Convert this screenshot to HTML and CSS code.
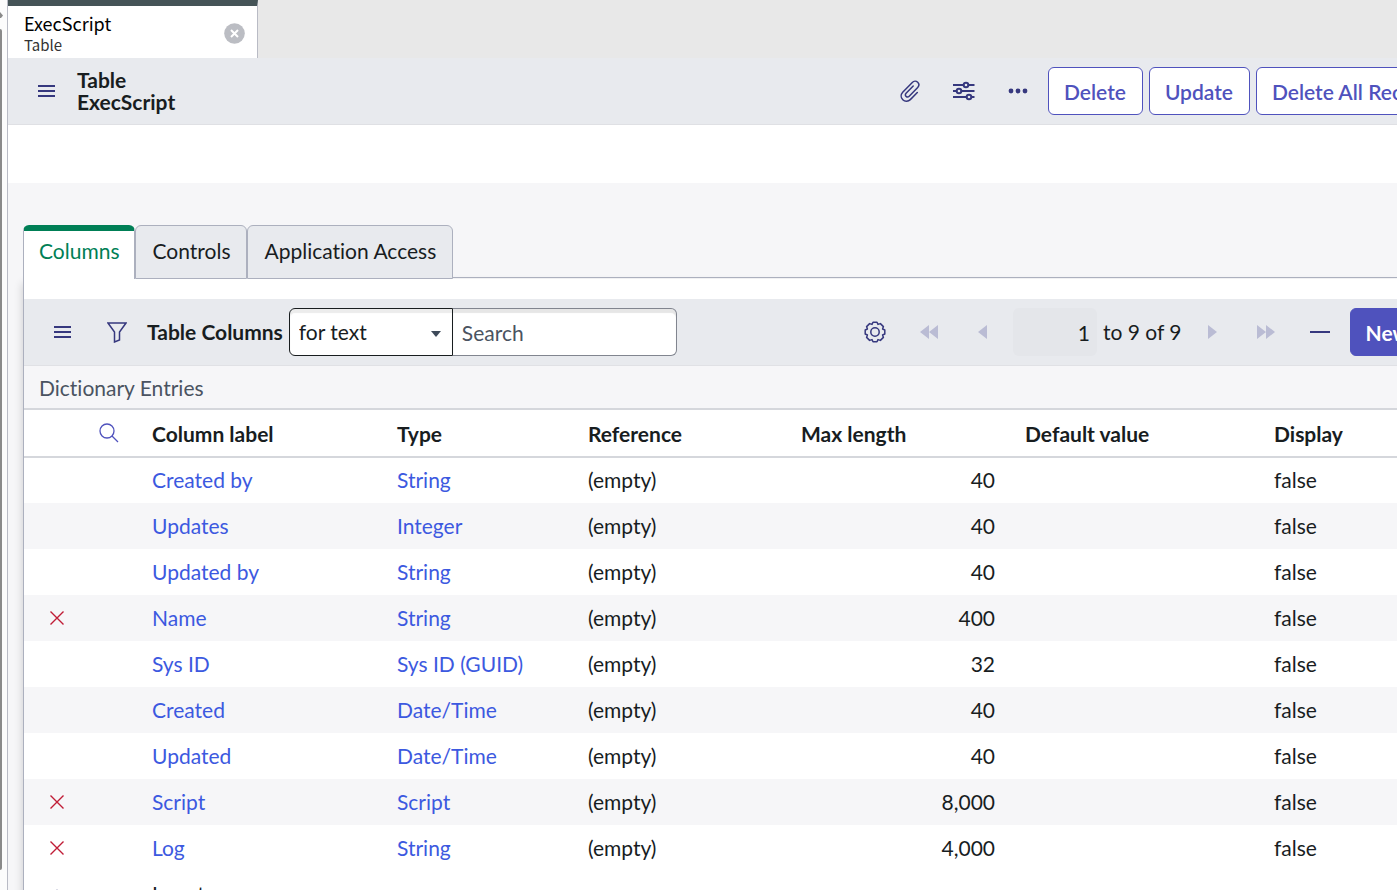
FILE: index.html
```
<!DOCTYPE html>
<html lang="en">
<head>
  <meta charset="UTF-8" />
  <title>ExecScript | Table</title>
  <meta name="viewport" content="width=device-width,initial-scale=1" />
  <link rel="stylesheet" href="styles.css">
</head>
<body>
  <div class="page">
    <!-- edge of the collapsed navigator -->
    <div class="rail">
      <svg class="rail-arrow" width="3" height="8" viewBox="0 0 3 8"><path d="M0 1 L3 4.5 L1 7 H0 Z" fill="#8a8a8a"/></svg>
      <div class="rail-thumb"></div>
    </div>

    <main class="workspace">
      <div class="tab-strip">
        <div class="doc-tab">
          <div>
            <div class="doc-title">ExecScript</div>
            <div class="doc-sub">Table</div>
          </div>
          <button type="button" class="doc-close" aria-label="Close tab">
            <svg width="21" height="21" viewBox="0 0 21 21"><circle cx="10.5" cy="10.5" r="10.3" fill="#bbbdc3"/><path d="M7 7 L14 14 M14 7 L7 14" stroke="#fff" stroke-width="2"/></svg>
          </button>
        </div>
      </div>

      <header class="form-header">
        <button type="button" class="icon-btn form-menu" aria-label="Menu">
          <svg width="18" height="12" viewBox="0 0 18 12"><path d="M0 1 H17 M0 6 H17 M0 11 H17" stroke="#36387e" stroke-width="2"/></svg>
        </button>
        <h1 class="form-title">Table<br>ExecScript</h1>
        <div class="form-actions">
          <button type="button" class="icon-btn" aria-label="Attachments">
            <svg width="22" height="24" viewBox="0 0 22 24" fill="none" stroke="#36387e" stroke-width="1.5" stroke-linecap="round"><path d="M18.3 13.5 L11.3 20.6 C9.3 22.6 6 22.9 3.8 20.8 C1.6 18.7 1.7 15.5 3.7 13.3 L13.3 3.4 C14.8 1.8 17.2 1.8 18.7 3.2 C20.2 4.7 20.1 6.9 18.7 8.4 L10.2 17.2 C9.3 18.1 8 18.2 7.1 17.4 C6.2 16.5 6.3 15.2 7.1 14.3 L14.2 7"/></svg>
          </button>
          <button type="button" class="icon-btn" aria-label="Personalize form">
            <svg width="22" height="20" viewBox="0 0 22 20" fill="none" stroke="#36387e" stroke-width="2"><path d="M0 4 H10.5 M15.5 4 H21.5 M0 10 H3.5 M8.5 10 H21.5 M0 16 H13.5 M18.5 16 H21.5"/><circle cx="13" cy="4" r="2.3"/><circle cx="6" cy="10" r="2.3"/><circle cx="16" cy="16" r="2.3"/></svg>
          </button>
          <button type="button" class="icon-btn more" aria-label="More options">
            <svg width="20" height="6" viewBox="0 0 20 6" fill="#36387e"><circle cx="3" cy="3" r="2.4"/><circle cx="10" cy="3" r="2.4"/><circle cx="17" cy="3" r="2.4"/></svg>
          </button>
          <button type="button" class="btn">Delete</button>
          <button type="button" class="btn">Update</button>
          <button type="button" class="btn">Delete All Records</button>
        </div>
      </header>

      <div class="form-body"></div>

      <section class="related">
        <div class="tabs" role="tablist">
          <button type="button" class="tab active" role="tab" aria-selected="true">Columns</button>
          <button type="button" class="tab" role="tab">Controls</button>
          <button type="button" class="tab" role="tab">Application Access</button>
          <div class="tabs-line"></div>
        </div>

        <div class="panel">
          <div class="list-bar">
            <button type="button" class="icon-btn list-menu" aria-label="List menu">
              <svg width="18" height="12" viewBox="0 0 18 12"><path d="M0 1 H17 M0 6 H17 M0 11 H17" stroke="#36387e" stroke-width="2"/></svg>
            </button>
            <button type="button" class="icon-btn list-filter" aria-label="Filter">
              <svg width="20" height="21" viewBox="0 0 20 21" fill="none" stroke="#36387e" stroke-width="1.5"><path d="M1 1 H19 L12.5 10 V18 L7.5 20 V10 Z"/></svg>
            </button>
            <h2 class="list-title">Table Columns</h2>
            <div class="search-group">
              <div class="select-wrap">
                <select class="search-field" aria-label="Search field">
                  <option>for text</option>
                </select>
                <svg class="caret" width="10" height="6" viewBox="0 0 10 6"><path d="M0 0 H10 L5 6 Z" fill="#3e4a5a"/></svg>
              </div>
              <input type="text" class="search-input" placeholder="Search" aria-label="Search">
            </div>

            <div class="pager">
              <button type="button" class="icon-btn" aria-label="List settings">
                <svg width="22" height="22" viewBox="0 0 22 22" fill="none" stroke="#36387e" stroke-width="1.5"><circle cx="11" cy="11" r="4.2"/><path d="M8 3.4 L9 1.2 H13 L14 3.4 L16.4 2.6 L19.4 5.6 L18.6 8 L20.8 9 V13 L18.6 14 L19.4 16.4 L16.4 19.4 L14 18.6 L13 20.8 H9 L8 18.6 L5.6 19.4 L2.6 16.4 L3.4 14 L1.2 13 V9 L3.4 8 L2.6 5.6 L5.6 2.6 Z" stroke-linejoin="round"/></svg>
              </button>
              <button type="button" class="icon-btn" aria-label="First page">
                <svg width="18" height="14" viewBox="0 0 18 14" fill="#babcd4"><path d="M9 0 V14 L0 7 Z M18 0 V14 L9 7 Z"/></svg>
              </button>
              <button type="button" class="icon-btn" aria-label="Previous page">
                <svg width="18" height="14" viewBox="0 0 18 14" fill="#babcd4"><path d="M13 0 V14 L4 7 Z"/></svg>
              </button>
              <input type="text" class="page-input" value="1" aria-label="Go to row">
              <span class="page-text">to 9 of 9</span>
              <button type="button" class="icon-btn" aria-label="Next page">
                <svg width="18" height="14" viewBox="0 0 18 14" fill="#babcd4"><path d="M5 0 V14 L14 7 Z"/></svg>
              </button>
              <button type="button" class="icon-btn" aria-label="Last page">
                <svg width="18" height="14" viewBox="0 0 18 14" fill="#babcd4"><path d="M0 0 V14 L9 7 Z M9 0 V14 L18 7 Z"/></svg>
              </button>
              <button type="button" class="icon-btn more" aria-label="Collapse list">
                <svg width="20" height="2" viewBox="0 0 20 2"><path d="M0 1 H20" stroke="#36387e" stroke-width="2"/></svg>
              </button>
              <button type="button" class="btn btn-primary">New</button>
            </div>
          </div>

          <div class="crumb">Dictionary Entries</div>

          <table class="list">
            <colgroup>
              <col class="c-del"><col class="c-label"><col class="c-type"><col class="c-ref"><col class="c-max"><col class="c-def"><col>
            </colgroup>
            <thead>
              <tr>
                <th class="search-cell">
                  <button type="button" class="icon-btn" aria-label="Show column search">
                    <svg width="20" height="20" viewBox="0 0 20 20" fill="none" stroke="#4f52bd" stroke-width="1.3"><circle cx="8" cy="8" r="7"/><path d="M13 13 L19 19"/></svg>
                  </button>
                </th>
                <th>Column label</th><th>Type</th><th>Reference</th><th>Max length</th><th>Default value</th><th>Display</th>
              </tr>
            </thead>
            <tbody>
              <tr><td></td><td><a href="#">Created by</a></td><td><a href="#">String</a></td><td>(empty)</td><td class="num">40</td><td></td><td>false</td></tr>
              <tr><td></td><td><a href="#">Updates</a></td><td><a href="#">Integer</a></td><td>(empty)</td><td class="num">40</td><td></td><td>false</td></tr>
              <tr><td></td><td><a href="#">Updated by</a></td><td><a href="#">String</a></td><td>(empty)</td><td class="num">40</td><td></td><td>false</td></tr>
              <tr><td class="del"><button type="button" class="icon-btn" aria-label="Delete row"><svg width="14" height="14" viewBox="0 0 14 14"><path d="M0.5 0.5 L13.5 13.5 M13.5 0.5 L0.5 13.5" stroke="#c01c36" stroke-width="1.4"/></svg></button></td><td><a href="#">Name</a></td><td><a href="#">String</a></td><td>(empty)</td><td class="num">400</td><td></td><td>false</td></tr>
              <tr><td></td><td><a href="#">Sys ID</a></td><td><a href="#">Sys ID (GUID)</a></td><td>(empty)</td><td class="num">32</td><td></td><td>false</td></tr>
              <tr><td></td><td><a href="#">Created</a></td><td><a href="#">Date/Time</a></td><td>(empty)</td><td class="num">40</td><td></td><td>false</td></tr>
              <tr><td></td><td><a href="#">Updated</a></td><td><a href="#">Date/Time</a></td><td>(empty)</td><td class="num">40</td><td></td><td>false</td></tr>
              <tr><td class="del"><button type="button" class="icon-btn" aria-label="Delete row"><svg width="14" height="14" viewBox="0 0 14 14"><path d="M0.5 0.5 L13.5 13.5 M13.5 0.5 L0.5 13.5" stroke="#c01c36" stroke-width="1.4"/></svg></button></td><td><a href="#">Script</a></td><td><a href="#">Script</a></td><td>(empty)</td><td class="num">8,000</td><td></td><td>false</td></tr>
              <tr><td class="del"><button type="button" class="icon-btn" aria-label="Delete row"><svg width="14" height="14" viewBox="0 0 14 14"><path d="M0.5 0.5 L13.5 13.5 M13.5 0.5 L0.5 13.5" stroke="#c01c36" stroke-width="1.4"/></svg></button></td><td><a href="#">Log</a></td><td><a href="#">String</a></td><td>(empty)</td><td class="num">4,000</td><td></td><td>false</td></tr>
            </tbody>
            <tfoot>
              <tr><td class="del"><svg width="14" height="14" viewBox="0 0 14 14"><path d="M7 0 V14 M0 7 H14" stroke="#dcdde8" stroke-width="2"/></svg></td><td colspan="6">Insert a new row...</td></tr>
            </tfoot>
          </table>
        </div>
      </section>
    </main>
  </div>
</body>
</html>
```

FILE: styles.css
```
* {
    box-sizing: border-box;
}

body {
    margin: 0;
    height: 100vh;
    overflow: hidden;
    font-family: Lato, "Liberation Sans", sans-serif;
    font-size: 21px;
    font-variant-ligatures: none;
    color: #181d1f;
    background: #fff;
}

button, input, select {
    font: inherit;
    font-variant-ligatures: none;
    color: inherit;
    margin: 0;
}

.page {
    display: flex;
    height: 100vh;
}

/* left edge */
.rail {
    flex: 0 0 7px;
    display: flex;
    flex-direction: column;
    padding: 11px 0 20px;
    background: #fcfcfc;
}

.rail-thumb {
    flex: 1;
    width: 2px;
    margin-top: 10px;
    background: #8a8a8a;
    border-radius: 0 2px 2px 0;
}

.workspace {
    flex: 1;
    min-width: 0;
    overflow: hidden;
    border-left: 1px solid #b9bbc5;
    background: #f6f6f8;
}

/* document tabs */
.tab-strip {
    display: flex;
    background: #e8e8e8;
}

.doc-tab {
    display: flex;
    justify-content: space-between;
    width: 250px;
    height: 58px;
    padding: 6px 12px 0 16px;
    border-top: 6px solid #455457;
    border-right: 1px solid #b9bbc5;
    background: #fff;
    font-family: "Noto Sans CJK SC", sans-serif;
}

.doc-title {
    font-size: 18px;
    line-height: 22px;
    color: #000;
}

.doc-sub {
    font-size: 15px;
    line-height: 22px;
    color: #333;
}

.doc-close {
    align-self: flex-start;
    margin-top: 11px;
    padding: 0;
    border: 0;
    background: none;
    line-height: 0;
}

/* form header */
.form-header {
    display: flex;
    align-items: center;
    height: 67px;
    background: #e8eaee;
    border-bottom: 1px solid #dfe0e4;
}

.icon-btn {
    display: flex;
    align-items: center;
    justify-content: center;
    flex: none;
    width: 54px;
    height: 48px;
    padding: 0;
    border: 0;
    background: none;
}

.form-menu {
    width: 46px;
    margin-left: 16px;
}

.form-title {
    margin: 0 0 0 7px;
    font-size: 21px;
    line-height: 22px;
    font-weight: 700;
}

/* runs past the right edge on small windows */
.form-actions {
    display: flex;
    flex: 0 0 auto;
    width: 514px;
    min-width: 0;
    margin-left: auto;
    white-space: nowrap;
}

.more {
    margin-right: 3px;
}

.btn {
    flex: none;
    height: 48px;
    margin-right: 6px;
    padding: 0 16px 0 15px;
    border: 1px solid #4f52bd;
    border-radius: 6px;
    background: #fff;
    color: #4f52bd;
    font-weight: 600;
}

.btn-primary {
    background: #4f52bd;
    color: #fff;
    font-weight: 700;
}

.form-body {
    height: 58px;
    background: #fff;
}

/* related lists */
.related {
    padding: 42px 0 0 15px;
}

.tabs {
    display: flex;
}

.tab {
    height: 54px;
    padding: 0 16px 4px;
    border: 1px solid #acb0be;
    border-radius: 6px 6px 0 0;
    background: #e8eaee;
}

.tab.active {
    border-top: 6px solid #007f56;
    border-bottom: 0;
    padding: 0 15px 10px;
    background: #fff;
    color: #007f56;
}

.tabs-line {
    flex: 1;
    height: 53px;
    border-bottom: 1px solid #acb0be;
}

.panel {
    padding-top: 20px;
    border-left: 1px solid #acb0be;
    background: #fff;
    box-shadow: -1px 4px 8px rgba(0, 0, 0, 0.15);
}

.list-bar {
    display: flex;
    align-items: center;
    height: 67px;
    background: #e8eaee;
    border-bottom: 1px solid #e0e1e5;
}

.list-menu {
    margin-left: 12px;
}

.list-title {
    margin: 0 6px 0 3px;
    padding-bottom: 2px;
    font-size: 21px;
    font-weight: 700;
    white-space: nowrap;
}

.search-group {
    display: flex;
    height: 48px;
}

.select-wrap {
    position: relative;
}

.search-field {
    appearance: none;
    width: 164px;
    height: 48px;
    padding: 0 9px 2px;
    border: 1px solid #181d1f;
    border-radius: 6px 0 0 6px;
    background: #fff;
    box-shadow: inset 0 4px 1px #ececec;
}

.caret {
    position: absolute;
    right: 12px;
    top: 23px;
}

.search-input {
    width: 224px;
    height: 48px;
    padding: 0 9px;
    border: 1px solid #81858f;
    border-left: 0;
    border-radius: 0 6px 6px 0;
    background: #fff;
    box-shadow: inset 0 4px 1px #e6e6e6;
}

.search-input::placeholder {
    color: #4a5361;
    opacity: 1;
}

.pager {
    display: flex;
    align-items: center;
    flex: 0 0 auto;
    width: 549px;
    min-width: 0;
    margin-left: auto;
}

.page-input {
    width: 84px;
    height: 48px;
    margin-left: 3px;
    padding: 0 7px;
    border: 0;
    border-radius: 6px;
    background: #e4e6ea;
    text-align: right;
}

.page-text {
    margin: 0 3px 0 6px;
    padding-bottom: 2px;
    white-space: nowrap;
}

.crumb {
    padding: 2px 0 0 15px;
    line-height: 40px;
    color: #4a5361;
    background: #f6f6f8;
}

.list {
    width: 100%;
    table-layout: fixed;
    border-collapse: collapse;
    border-top: 2px solid #d5d7dc;
}

.c-del { width: 120px; }
.c-label { width: 245px; }
.c-type { width: 191px; }
.c-ref { width: 213px; }
.c-max { width: 224px; }
.c-def { width: 249px; }

.list th {
    height: 48px;
    padding: 0 8px;
    text-align: left;
    font-weight: 700;
    border-bottom: 2px solid #d5d7dc;
}

.list td {
    height: 46px;
    padding: 0 8px 2px;
    white-space: nowrap;
}

.list tbody tr:nth-child(even) {
    background: #f6f6f8;
}

.list .search-cell {
    padding: 0 7px 0 58px;
}

.list .search-cell .icon-btn {
    height: 40px;
}

.list .num {
    padding-right: 22px;
    text-align: right;
}

.list .del {
    padding: 0 0 0 26px;
}

.list .del .icon-btn {
    width: 14px;
    height: 20px;
}

.list a {
    color: #3c59e0;
    text-decoration: none;
}
```
